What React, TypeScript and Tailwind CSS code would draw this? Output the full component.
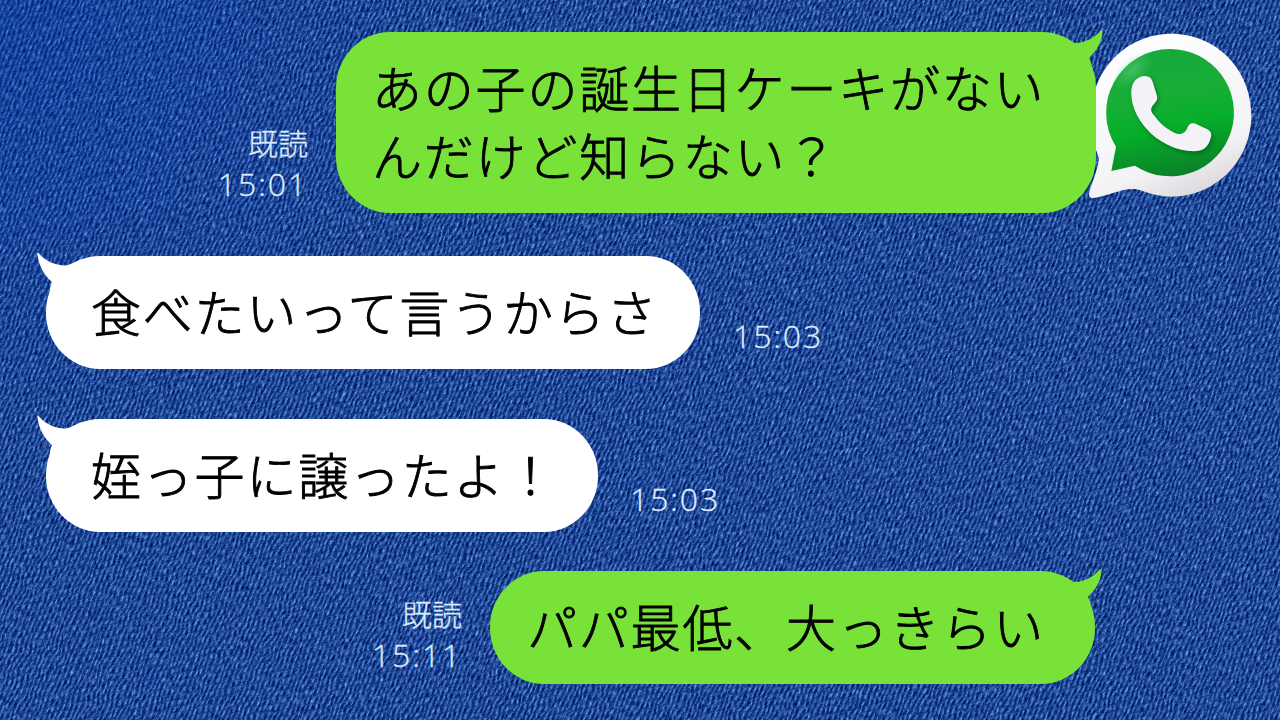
import { ReactNode } from 'react';

interface MessageProps {
  side: 'sent' | 'received';
  time: string;
  className: string;
  bubbleClass: string;
  metaClass: string;
  children: ReactNode;
}

function Denim() {
  return (
    <div className="absolute inset-0 -z-10 overflow-hidden bg-[#1b469a]">
      {/* Uneven colour of the cloth */}
      <svg className="absolute -top-[400px] -left-[200px] h-[1500px] w-[1700px] rotate-[24deg]">
        <filter id="denim" x="0" y="0" width="100%" height="100%" colorInterpolationFilters="sRGB">
          <feTurbulence type="fractalNoise" baseFrequency="0.48 0.17" numOctaves="2" seed="7" />
          <feColorMatrix values="1 0 0 0 0  1 0 0 0 0  1 0 0 0 0  0 0 0 0 1" />
          <feComponentTransfer>
            <feFuncR type="table" tableValues="0 0 0.01 0.09 0.26 0.6 0.8" />
            <feFuncG type="table" tableValues="0 0.03 0.13 0.27 0.47 0.77 0.9" />
            <feFuncB type="table" tableValues="0.22 0.3 0.44 0.6 0.78 0.95 1" />
          </feComponentTransfer>
        </filter>
        <rect width="100%" height="100%" filter="url(#denim)" />
      </svg>
      {/* Twill threads, leaning to the right */}
      <svg className="absolute inset-0 h-full w-full opacity-50">
        <filter id="wobble" x="0" y="0" width="100%" height="100%" colorInterpolationFilters="sRGB">
          <feTurbulence type="fractalNoise" baseFrequency="0.05" numOctaves="2" seed="3" />
          <feDisplacementMap in="SourceGraphic" scale="7" xChannelSelector="R" yChannelSelector="G" />
        </filter>
        <pattern id="twill" width="4.6" height="7.5" patternUnits="userSpaceOnUse" patternTransform="rotate(22) skewY(-34)">
          <rect width="4.6" height="7.5" fill="#17439a" />
          <path d="M1.200 0.400V6" stroke="#8ab8f8" strokeWidth="1.3" />
          <path d="M3.400 1.500V7.300" stroke="#000f4c" strokeWidth="1.9" />
        </pattern>
        <g filter="url(#wobble)">
          <rect x="-20" y="-20" width="1320" height="760" fill="url(#twill)" />
        </g>
      </svg>
      <div className="absolute inset-0 bg-[radial-gradient(circle_at_0%_0%,rgba(0,60,170,0.35),transparent_30%)]" />
    </div>
  );
}

function Tail({ side }: { side: 'sent' | 'received' }) {
  if (side === 'sent') {
    return (
      <svg className="absolute -top-1 -right-2 h-12 w-12" viewBox="-40 -4 48 48" fill="#79e239">
        <path d="M-36 4C-28 8 -24 11 -19 11C-9 10 -1 5 4 -1C5 -2.500 6.500 -2 6.500 0C6 10 1 18 -7 26C-5 29 -4 34 -3.500 39L-22 40Z" />
      </svg>
    );
  }
  return (
    <svg className="absolute -top-1 -left-2.5 h-12 w-12" viewBox="-10 -4 48 48" fill="#ffffff">
      <path d="M36 3C28 6 24 9 19 9.500C8 9 -1 5 -7.500 -3C-8.500 -4 -9 -3.500 -8.500 -1C-7 10 -2 19 6 26C4 30 3.500 35 3.500 39L22 40Z" />
    </svg>
  );
}

function Message({ side, time, className, bubbleClass, metaClass, children }: MessageProps) {
  const sent = side === 'sent';
  return (
    <div className={`flex items-end ${sent ? 'flex-row-reverse' : ''} ${className}`}>
      <div
        className={`relative z-10 flex shrink-0 items-center rounded-[54px/56px] pb-1.5 text-[50px] leading-[68px] font-light tracking-[1.8px] whitespace-nowrap text-black [-webkit-text-stroke:0.9px_#000] ${
          sent ? 'bg-[#79e239]' : 'bg-white'
        } ${bubbleClass}`}
      >
        <Tail side={side} />
        <p>{children}</p>
      </div>
      <div className={`flex flex-col text-[#dcebff] ${sent ? 'items-end' : 'items-start'} ${metaClass}`}>
        {sent && <span className="mb-1 text-[30px] leading-9 font-light [-webkit-text-stroke:0.3px_#dcebff]">既読</span>}
        <span className="font-['Open_Sans','Noto_Sans_CJK_JP',sans-serif] text-[32px] leading-10 font-light tracking-[1.9px] [-webkit-text-stroke:0.3px_#dcebff]">
          {time}
        </span>
      </div>
    </div>
  );
}

function WhatsAppLogo() {
  return (
    <svg className="absolute top-[10px] left-[1040px] h-[220px] w-[240px]" viewBox="0 0 720 660">
      <defs>
        <linearGradient id="rim" x1="0.3" y1="0" x2="0.7" y2="1">
          <stop offset="0" stopColor="#ffffff" />
          <stop offset="0.75" stopColor="#f3f2f5" />
          <stop offset="1" stopColor="#d9d5da" />
        </linearGradient>
        <linearGradient id="face" x1="0.4" y1="0" x2="0.6" y2="1">
          <stop offset="0" stopColor="#16a83c" />
          <stop offset="0.35" stopColor="#18ae37" />
          <stop offset="0.6" stopColor="#06ae2a" />
          <stop offset="1" stopColor="#0b7f28" />
        </linearGradient>
        <radialGradient id="shine">
          <stop offset="0" stopColor="#6ed688" stopOpacity="0.5" />
          <stop offset="1" stopColor="#6ed688" stopOpacity="0" />
        </radialGradient>
        <filter id="soft" x="-20%" y="-20%" width="140%" height="140%">
          <feGaussianBlur stdDeviation="6" />
        </filter>
      </defs>
      <path
        d="M394 71C530 71 634 180 634 315C634 452 527 560 394 560C350 560 318 546 290 538C250 532 215 556 160 564C150 565 145 558 148 548C154 520 174 480 177 445C162 405 154 365 154 315C154 180 260 71 394 71Z"
        fill="url(#rim)"
      />
      <path d="M391 117A191 191 0 1 1 285 467L214 483L228 410A191 191 0 0 1 391 117Z" fill="url(#face)" />
      <ellipse cx="278" cy="180" rx="75" ry="38" transform="rotate(-42 278 180)" fill="url(#shine)" />
      <path
        d="M274 255C271 218 292 198 315 198C331 199 335 207 339 218L351 258C354 274 343 279 336 290C331 298 334 306 342 316C361 342 381 358 405 369C421 376 435 369 441 356C446 341 454 337 467 341L502 358C515 365 516 374 511 388C503 414 488 424 462 424C405 422 355 396 320 357C292 325 276 292 274 255Z"
        fill="#045c1c"
        opacity="0.65"
        filter="url(#soft)"
        transform="translate(5 7)"
      />
      <path
        d="M274 255C271 218 292 198 315 198C331 199 335 207 339 218L351 258C354 274 343 279 336 290C331 298 334 306 342 316C361 342 381 358 405 369C421 376 435 369 441 356C446 341 454 337 467 341L502 358C515 365 516 374 511 388C503 414 488 424 462 424C405 422 355 396 320 357C292 325 276 292 274 255Z"
        fill="#f4f2f6"
      />
    </svg>
  );
}

export default function App() {
  return (
    <main className="relative isolate flex h-[720px] w-[1280px] flex-col overflow-hidden font-['Noto_Sans_CJK_JP',sans-serif]">
      <Denim />
      <WhatsAppLogo />

      <Message
        side="sent"
        time="15:01"
        className="mt-8 pr-[184px]"
        bubbleClass="h-[181px] w-[760px] pl-[36px]"
        metaClass="mr-7 mb-[9px]"
      >
        あの子の誕生日ケーキがない
        <br />
        んだけど知らない？
      </Message>

      <Message
        side="received"
        time="15:03"
        className="mt-[43px] pl-[46px]"
        bubbleClass="h-[113px] w-[654px] pl-[45px]"
        metaClass="mb-[13px] ml-[33px]"
      >
        食べたいって言うからさ
      </Message>

      <Message
        side="received"
        time="15:03"
        className="mt-[50px] pl-[46px]"
        bubbleClass="h-[113px] w-[552px] pl-[45px]"
        metaClass="mb-[13px] ml-[32px]"
      >
        姪っ子に譲ったよ！
      </Message>

      <Message
        side="sent"
        time="15:11"
        className="mt-[39px] pr-[185px]"
        bubbleClass="h-[113px] w-[605px] pl-[37px]"
        metaClass="mr-7 mb-[9px]"
      >
        パパ最低、大っきらい
      </Message>
    </main>
  );
}
